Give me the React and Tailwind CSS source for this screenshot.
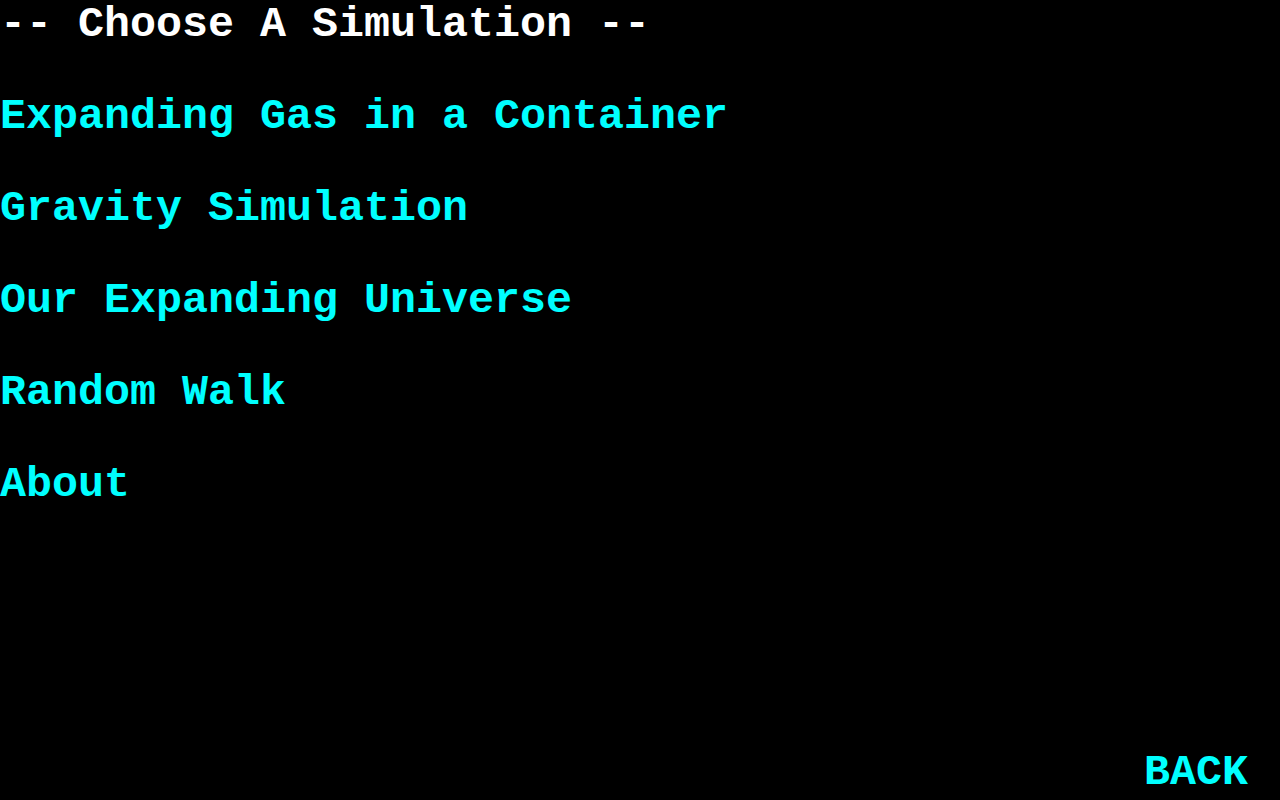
export default function App() {
  const sims = [
    "Expanding Gas in a Container",
    "Gravity Simulation",
    "Our Expanding Universe",
    "Random Walk",
    "About",
  ];

  return (
    <div className="min-h-screen h-[800px] bg-black flex flex-col pt-[2px] font-['Courier_New','Nimbus_Mono_PS','FreeMono','Liberation_Mono',monospace] font-bold text-[43.33px] leading-[46px]">
      {/* TITLE */}
      <h1 className="text-white whitespace-pre">-- Choose A Simulation --</h1>

      {/* MENU */}
      <ul className="flex flex-col gap-[46px] mt-[46px]">
        {sims.map((s) => (
          <li key={s}>
            <button className="text-[#00ffff] whitespace-pre cursor-pointer">{s}</button>
          </li>
        ))}
      </ul>

      {/* BACK */}
      <div className="mt-auto flex justify-end pr-[32px] pb-[4px]">
        <button className="text-[#00ffff] cursor-pointer">BACK</button>
      </div>
    </div>
  );
}
